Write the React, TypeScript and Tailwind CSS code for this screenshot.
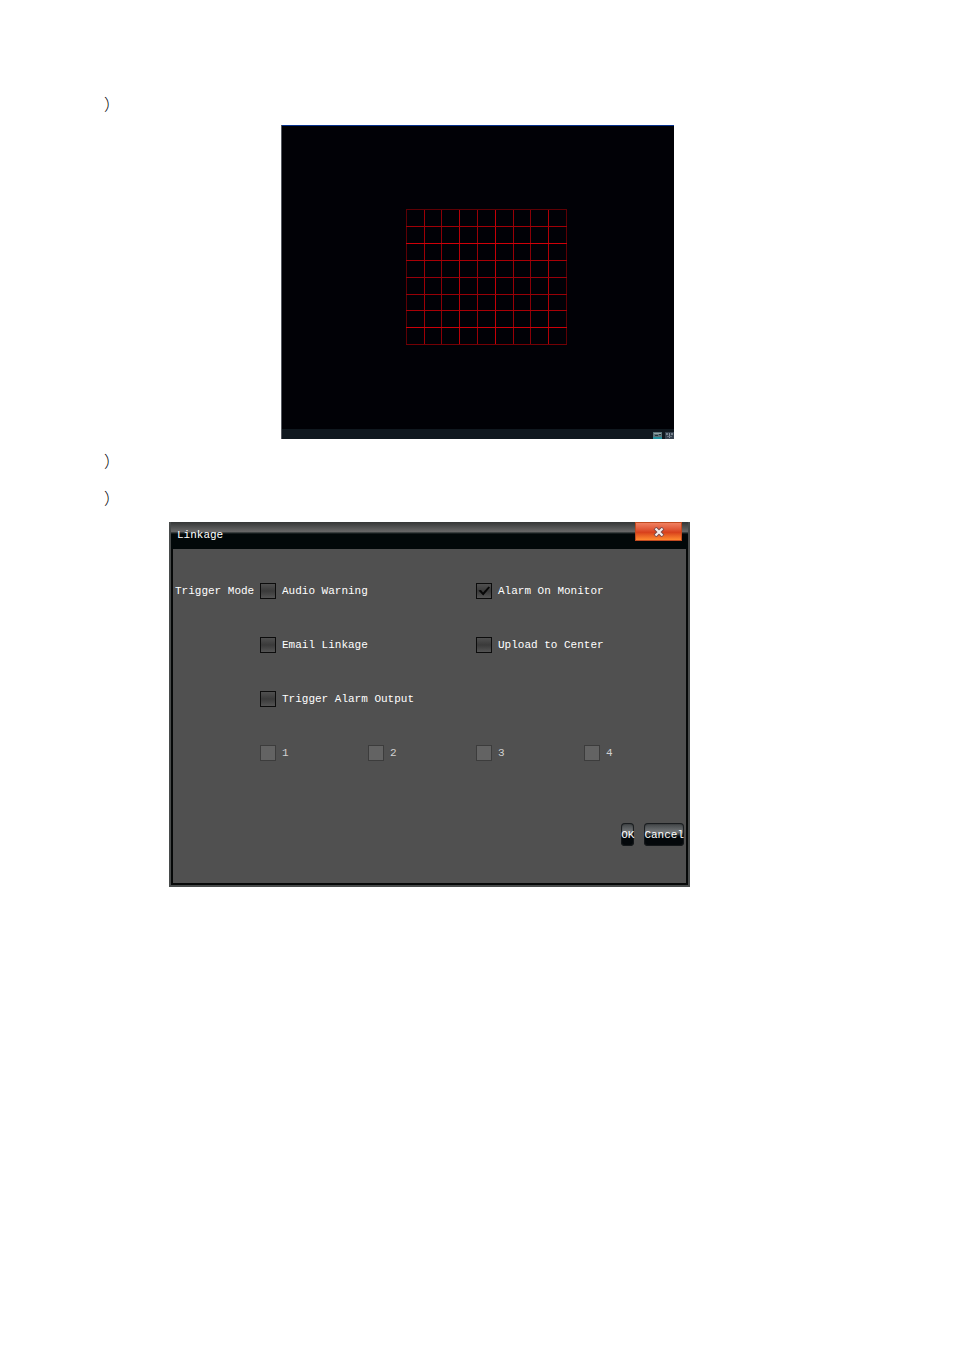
import React, { useState } from 'react';

const columns = [
  { x: 125, color: '#5c0004' },
  { x: 143, color: '#9c0006' },
  { x: 160, color: '#8a0006' },
  { x: 178, color: '#b80007' },
  { x: 196, color: '#980006' },
  { x: 214, color: '#c40007' },
  { x: 232, color: '#980006' },
  { x: 249, color: '#8a0006' },
  { x: 267, color: '#b00006' },
  { x: 285, color: '#5c0004' },
];

const rows = [
  { y: 84, color: '#5c0004' },
  { y: 101, color: '#a00006' },
  { y: 118, color: '#d00008' },
  { y: 135, color: '#a80006' },
  { y: 152, color: '#98000a' },
  { y: 169, color: '#980006' },
  { y: 185, color: '#a80006' },
  { y: 202, color: '#cc0008' },
  { y: 219, color: '#740004' },
];

const MotionArea: React.FC = () => (
  <svg viewBox="0 0 393 314" className="block w-full" shapeRendering="crispEdges">
    <rect width="393" height="314" fill="#010106" />
    <rect y="304" width="393" height="10" fill="#10181f" />
    {columns.map(col => (
      <rect key={col.x} x={col.x} y="84" width="1" height="136" fill={col.color} />
    ))}
    {rows.map(row => (
      <rect key={row.y} x="125" y={row.y} width="161" height="1" fill={row.color} />
    ))}
    <rect width="393" height="1" fill="#06308c" />
    <rect width="1" height="314" fill="#55585f" />
    {/* tray icons */}
    <rect x="372" y="307" width="9" height="7" fill="#5b7379" />
    <rect x="373" y="308" width="7" height="1" fill="#93a2a4" />
    <rect x="374" y="310" width="3" height="1" fill="#26343a" />
    <rect x="378" y="309" width="2" height="1" fill="#26343a" />
    <rect x="372" y="312" width="9" height="2" fill="#228e9c" />
    <rect x="384" y="307" width="9" height="7" fill="#36424f" />
    <rect x="385" y="308" width="2" height="2" fill="#75808c" />
    <rect x="388" y="308" width="1" height="5" fill="#8792a0" />
    <rect x="390" y="308" width="2" height="2" fill="#75808c" />
    <rect x="386" y="311" width="5" height="1" fill="#67727f" />
  </svg>
);

interface CheckProps {
  label: string;
  defaultChecked?: boolean;
  disabled?: boolean;
  className?: string;
}

const Check: React.FC<CheckProps> = ({ label, defaultChecked = false, disabled = false, className = '' }) => {
  const [checked, setChecked] = useState(defaultChecked);

  return (
    <label className={`flex items-center gap-[6px] whitespace-nowrap ${disabled ? 'text-[#d0d0d0]' : ''} ${className}`}>
      <span className="grid shrink-0">
        <input
          type="checkbox"
          checked={checked}
          disabled={disabled}
          onChange={e => setChecked(e.target.checked)}
          className="col-start-1 row-start-1 h-4 w-4 appearance-none border border-[#0c0c0c] bg-linear-to-b from-[#505050] via-[#3a3a3a] to-[#545454] disabled:border-[#3c3c3c] disabled:bg-[#636363] disabled:bg-none"
        />
        {checked && (
          <svg viewBox="0 0 16 16" className="pointer-events-none col-start-1 row-start-1 h-4 w-4">
            <path d="M2.5 7.5 L5 7 L7 9.5 L12.5 3.5 L14 4.5 L7.2 12.5 Z" fill="#080808" />
          </svg>
        )}
      </span>
      {label}
    </label>
  );
};

const buttonClass =
  'h-[23px] rounded-[4px] bg-linear-to-b from-[#3c4042] from-0% via-[#74777a] via-40% to-[#04080b] to-60% text-center whitespace-nowrap inset-shadow-[0_0_1px_1px_#16191b]';

const LinkageDialog: React.FC = () => (
  <section className="w-full max-w-[521px] border-2 border-t-0 border-[#484b4b] bg-[#505050] font-['Liberation_Mono',monospace] text-[11px] leading-4 text-white">
    <header className="flex h-[27px] items-start justify-between bg-linear-to-b from-[#343636] from-0% via-[#686868] via-35% to-[#020809] to-45% pr-[6px] pl-[6px]">
      <h2 className="pt-[5px]">Linkage</h2>
      <button
        type="button"
        aria-label="Close"
        className="flex h-[19px] w-[47px] items-center justify-center border border-[#c04a20] bg-linear-to-b from-[#f08060] from-0% via-[#d8401c] via-55% to-[#ff8a30] to-100%"
      >
        <svg viewBox="0 0 12 10" className="h-[10px] w-3">
          <path d="M2 1 L10 9 M10 1 L2 9" stroke="#7c4a48" strokeWidth="4" />
          <path d="M2.5 1.5 L9.5 8.5 M9.5 1.5 L2.5 8.5" stroke="#f4eeee" strokeWidth="2.2" />
        </svg>
      </button>
    </header>
    <form className="border-2 border-t-0 border-[#060808] pt-[15px] pb-[37px]" onSubmit={e => e.preventDefault()}>
      <div className="grid auto-rows-[54px] grid-cols-[87px_108px_108px_108px_1fr] items-center">
        <span className="pl-[2px]">Trigger Mode</span>
        <Check label="Audio Warning" className="col-span-2" />
        <Check label="Alarm On Monitor" defaultChecked className="col-span-2" />
        <Check label="Email Linkage" className="col-span-2 col-start-2" />
        <Check label="Upload to Center" className="col-span-2" />
        <Check label="Trigger Alarm Output" className="col-span-4 col-start-2" />
        <Check label="1" disabled className="col-start-2" />
        <Check label="2" disabled />
        <Check label="3" disabled />
        <Check label="4" disabled />
      </div>
      <div className="mt-[43px] flex justify-end gap-[10px] pr-[2px]">
        <button type="submit" className={buttonClass}>OK</button>
        <button type="button" className={buttonClass}>Cancel</button>
      </div>
    </form>
  </section>
);

const Step: React.FC = () => (
  <p className="font-['Noto_Sans_CJK_SC',sans-serif] text-[16px] leading-[37px] font-light text-black">）</p>
);

const App: React.FC = () => (
  <main className="min-h-screen bg-white px-[104px] pt-[85px]">
    <Step />
    <figure className="mx-auto my-[3px] w-full max-w-[393px]">
      <MotionArea />
    </figure>
    <Step />
    <Step />
    <div className="mt-[6px] pl-[65px]">
      <LinkageDialog />
    </div>
  </main>
);

export default App;
